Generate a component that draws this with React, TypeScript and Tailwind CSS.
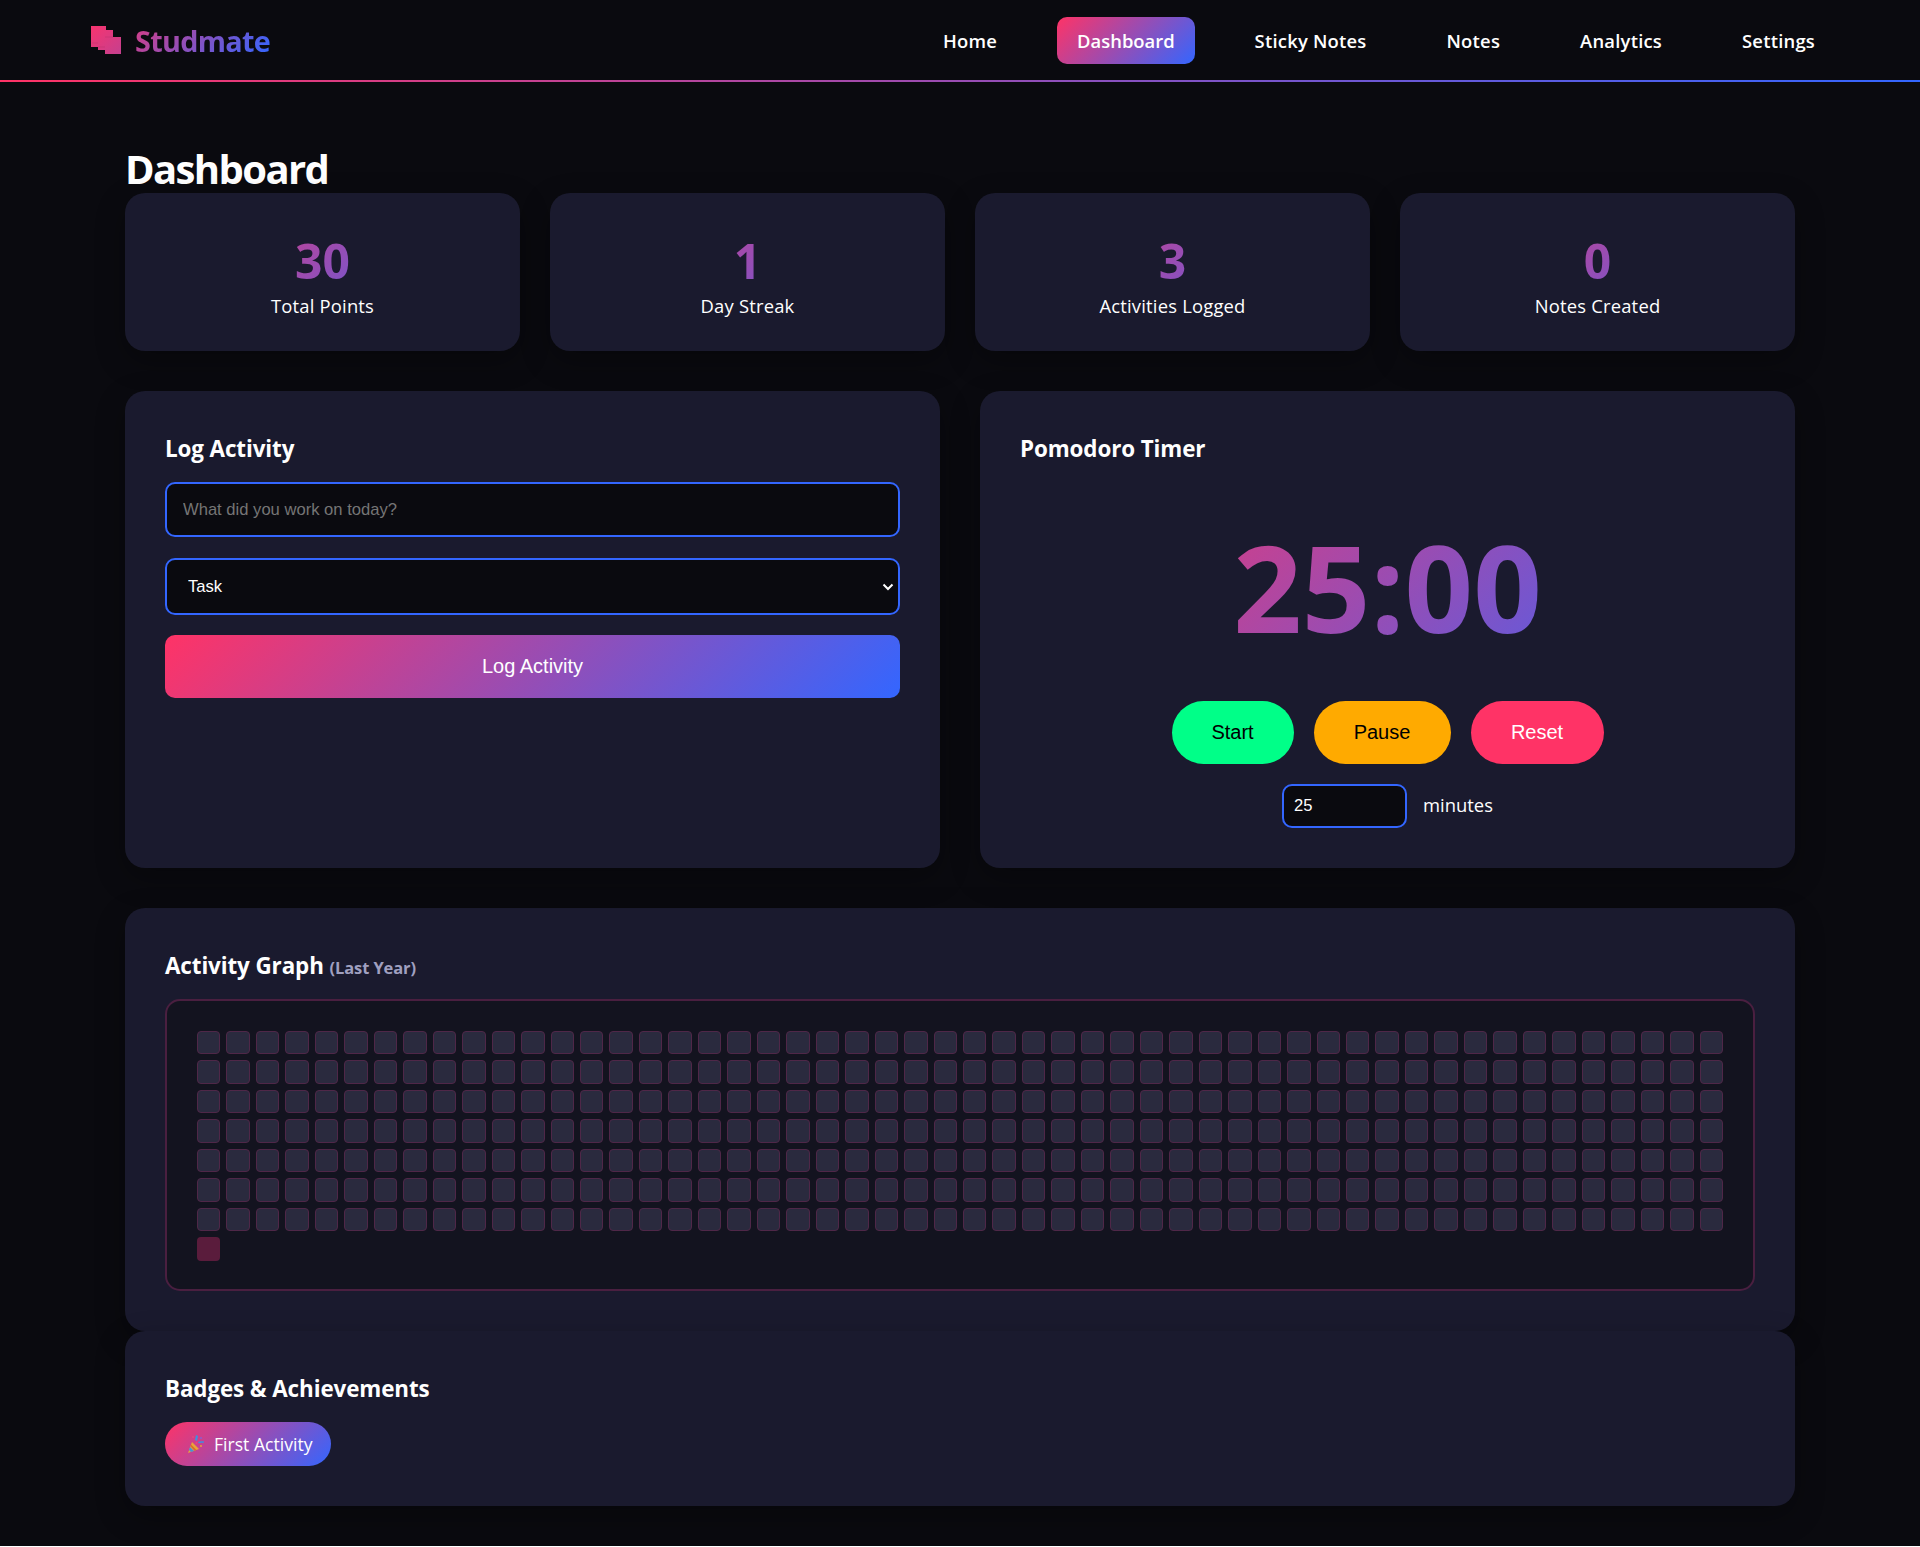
const sans = "font-['Open_Sans','Noto_Sans',sans-serif]";

const navLinks = ["Home", "Dashboard", "Sticky Notes", "Notes", "Analytics", "Settings"];

const stats = [
  { value: "30", label: "Total Points" },
  { value: "1", label: "Day Streak" },
  { value: "3", label: "Activities Logged" },
  { value: "0", label: "Notes Created" },
];

function LogoMark() {
  return (
    <svg width="30" height="28" viewBox="0 0 30 28" className="mr-[14px] shrink-0">
      <defs>
        <linearGradient id="logoFill" x1="0" y1="0" x2="1" y2="1">
          <stop offset="0" stopColor="#f7346f" />
          <stop offset="1" stopColor="#c5408f" />
        </linearGradient>
      </defs>
      <path d="M0 0h15v4h7v7h8v17H14v-4H7v-3H0z" fill="url(#logoFill)" />
      <path d="M1 17h6M7 21h7M14 11h8" stroke="#a72d5f" strokeWidth="0.6" opacity="0.5" />
    </svg>
  );
}

function PartyPopper() {
  return (
    <svg width="18" height="20" viewBox="0 0 18 20" className="shrink-0">
      <path d="M1 19 5 8l7 7z" fill="#e8a43a" />
      <path d="M2 16 3 13l4 4-3 1z" fill="#4a8fd8" />
      <path d="M4 10.5l5.5 5.5-2 .8L3.4 12z" fill="#d9692f" />
      <path d="M9 1l2 1-1 5-2-1z" fill="#3f8fe0" />
      <path d="M11 8c2-1 4-1 6-.5l-.3 1.4c-2-.4-3.6-.3-5 .4z" fill="#3f8fe0" />
      <circle cx="6" cy="3" r="1" fill="#e5487f" />
      <circle cx="14" cy="4" r="1" fill="#8c5bd0" />
      <circle cx="14" cy="12" r="1" fill="#e8a43a" />
      <circle cx="9.5" cy="9" r="0.9" fill="#e5487f" />
    </svg>
  );
}

function Header() {
  return (
    <header className="flex h-[82px] items-center justify-between border-b-2 border-transparent pl-[91px] pr-[85px] [background:linear-gradient(#0a0a0f,#0a0a0f)_padding-box,linear-gradient(90deg,#ff3366,#3366ff)_border-box]">
      <div className="flex items-center bg-[linear-gradient(135deg,#ff3366,#3366ff)] bg-clip-text text-[28.8px] font-bold leading-none text-transparent tracking-[-0.7px]">
        <LogoMark />
        <span className="pt-[2px]">Studmate</span>
      </div>
      <nav className="flex gap-10">
        {navLinks.map((link) => (
          <a
            key={link}
            className={`flex h-[47px] items-center rounded-[10px] px-5 pt-[2px] text-[18.4px] font-semibold text-white ${
              link === "Dashboard"
                ? "bg-[linear-gradient(135deg,#ff3366,#3366ff)] tracking-[0px]"
                : "tracking-[0.22px]"
            }`}
          >
            {link}
          </a>
        ))}
      </nav>
    </header>
  );
}

function StatCard({ value, label }: { value: string; label: string }) {
  return (
    <div className="flex h-[158px] flex-col rounded-[20px] bg-[#1a1a2e] px-[30px] pt-[36px] text-center shadow-[0_10px_30px_rgba(0,0,0,0.3)]">
      <div className="mb-px bg-[linear-gradient(135deg,#ff3366,#3366ff)] bg-clip-text text-[48px] font-bold leading-[64px] text-transparent">
        {value}
      </div>
      <div className="text-[18.4px] leading-6 tracking-[0.2px] text-white">{label}</div>
    </div>
  );
}

function Panel({ className = "", children }: { className?: string; children: React.ReactNode }) {
  return (
    <section className={`rounded-[20px] bg-[#1a1a2e] p-10 shadow-[0_10px_30px_rgba(0,0,0,0.3)] ${className}`}>
      {children}
    </section>
  );
}

function PanelTitle({ children }: { children: React.ReactNode }) {
  return (
    <h3 className="mb-[17px] pt-[2px] text-[22.4px] font-bold leading-8 tracking-[-0.1px] text-white">{children}</h3>
  );
}

function LogActivity() {
  return (
    <Panel>
      <PanelTitle>Log Activity</PanelTitle>
      <div className="font-['Liberation_Sans',Arial,sans-serif]">
        <input
          placeholder="What did you work on today?"
          className="mb-[21px] block h-[55px] w-full rounded-[10px] border-2 border-[#3366ff] bg-[#0a0a0f] px-[16px] text-[16.6px] text-white outline-none placeholder:text-[#757575]"
        />
        <div className="relative mb-5">
          <select className="block h-[57px] w-full appearance-none rounded-[10px] border-2 border-[#3366ff] bg-[#0a0a0f] pl-[21px] pr-[18px] pt-[2px] text-[16.6px] text-white outline-none">
            <option>Task</option>
            <option>Study</option>
            <option>Project</option>
          </select>
          <svg width="12" height="8" viewBox="0 0 12 8" className="pointer-events-none absolute right-[6px] top-[25px]">
            <path d="M1.5 1.5 6 6l4.5-4.5" fill="none" stroke="#ffffff" strokeWidth="2" />
          </svg>
        </div>
        <button className="block h-[63px] w-full rounded-[10px] bg-[linear-gradient(135deg,#ff3366,#3366ff)] pb-[2px] text-xl text-white">
          Log Activity
        </button>
      </div>
    </Panel>
  );
}

function PomodoroTimer() {
  return (
    <Panel>
      <PanelTitle>Pomodoro Timer</PanelTitle>
      <div className="mt-10 bg-[linear-gradient(135deg,#ff3366,#3366ff)] bg-clip-text text-center text-[120px] font-bold leading-[163px] text-transparent">
        25:00
      </div>
      <div className="mt-[33px] flex justify-center gap-5 font-['Liberation_Sans',Arial,sans-serif] text-xl">
        <button className="h-[63px] w-[122px] rounded-full bg-[#00ff88] pb-[2px] text-black">Start</button>
        <button className="h-[63px] w-[137px] rounded-full bg-[#ffaa00] pb-[2px] text-black">Pause</button>
        <button className="h-[63px] w-[133px] rounded-full bg-[#ff3366] pb-[2px] text-white">Reset</button>
      </div>
      <div className="mt-5 flex items-center justify-center gap-4">
        <input
          defaultValue="25"
          className="h-[44px] w-[125px] rounded-[10px] border-2 border-[#3366ff] bg-[#0a0a0f] px-[10px] font-['Liberation_Sans',Arial,sans-serif] text-[16.6px] text-white outline-none"
        />
        <span className="pb-[2px] text-[18.4px] text-white">minutes</span>
      </div>
    </Panel>
  );
}

function ActivityGraph() {
  return (
    <Panel className="mt-10">
      <PanelTitle>
        Activity Graph <span className="text-[16.5px] font-bold leading-none text-[#a0a0c0]">(Last Year)</span>
      </PanelTitle>
      <div className="rounded-[15px] border-2 border-[#4a1f40] bg-[#13131f] p-[30px] pb-[28px]">
        <div className="grid grid-cols-[repeat(52,minmax(0,1fr))] gap-[6px]">
          {Array.from({ length: 365 }, (_, day) => (
            <div
              key={day}
              className={
                day === 364
                  ? "aspect-square rounded-[4px] bg-[#5a1c3c]"
                  : "aspect-square rounded-[4px] border border-[#4f2748] bg-[#2a2a3e]"
              }
            />
          ))}
        </div>
      </div>
    </Panel>
  );
}

function Badges() {
  return (
    <Panel>
      <PanelTitle>Badges &amp; Achievements</PanelTitle>
      <div className="flex">
        <span className="flex h-[44px] w-[166px] items-center gap-[9px] rounded-full bg-[linear-gradient(135deg,#ff3366,#3366ff)] pl-[22px] text-[17.6px] text-white">
          <PartyPopper />
          First Activity
        </span>
      </div>
    </Panel>
  );
}

export default function App() {
  return (
    <div className={`min-h-[1546px] bg-[#0a0a0f] ${sans}`}>
      <Header />
      <main className="mx-auto w-[1670px] pt-[62px]">
        <h2 className="text-[40px] font-bold leading-[49px] tracking-[-1.6px] text-white">Dashboard</h2>
        <div className="grid grid-cols-4 gap-[30px]">
          {stats.map((stat) => (
            <StatCard key={stat.label} {...stat} />
          ))}
        </div>
        <div className="mt-10 grid grid-cols-2 gap-10">
          <LogActivity />
          <PomodoroTimer />
        </div>
        <ActivityGraph />
        <Badges />
      </main>
    </div>
  );
}
